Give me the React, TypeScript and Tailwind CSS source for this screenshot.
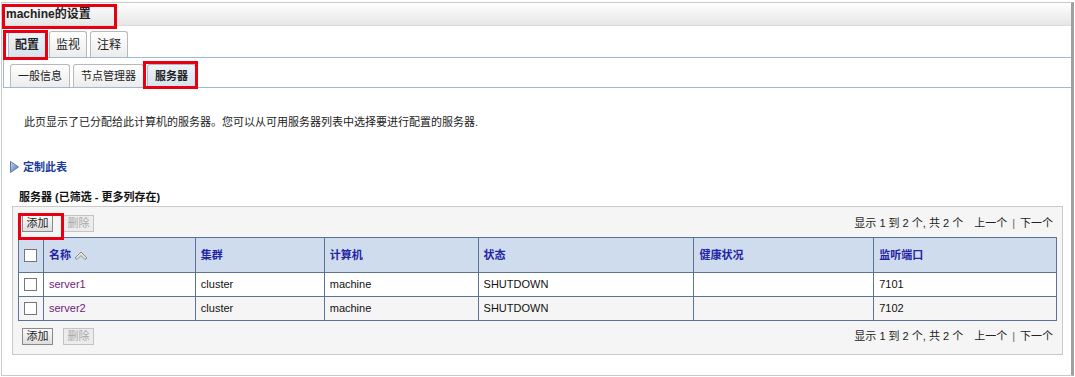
import React from 'react';

/**
 * machine 的设置 - 服务器页
 */

const FONT = "'Liberation Sans','Noto Sans CJK SC',sans-serif";

interface ServerRow {
  name: string;
  cluster: string;
  machine: string;
  state: string;
  health: string;
  port: string;
}

const rows: ServerRow[] = [
  { name: 'server1', cluster: 'cluster', machine: 'machine', state: 'SHUTDOWN', health: '', port: '7101' },
  { name: 'server2', cluster: 'cluster', machine: 'machine', state: 'SHUTDOWN', health: '', port: '7102' },
];

function Tab({ label, active }: { label: string; active?: boolean }) {
  return (
    <div
      className={`flex h-[26px] items-center rounded-t-[3px] border border-b-0 border-[#b8b8b8] px-[6px] text-[12px] text-[#222] ${
        active ? 'bg-linear-to-b from-[#eef3f8] to-[#d6e2ec] font-bold' : 'bg-linear-to-b from-white to-[#ececec]'
      }`}
    >
      {label}
    </div>
  );
}

function SubTab({ label, active }: { label: string; active?: boolean }) {
  return (
    <div
      className={`flex h-[23px] items-center rounded-t-[3px] border border-b-0 border-[#b8b8b8] px-[7px] text-[11px] text-[#222] ${
        active ? 'bg-linear-to-b from-[#eef3f8] to-[#d6e2ec] font-bold' : 'bg-linear-to-b from-white to-[#ececec]'
      }`}
    >
      {label}
    </div>
  );
}

function Checkbox() {
  return <div className="h-[13px] w-[13px] border border-[#777] bg-white" />;
}

function Buttons() {
  return (
    <div className="flex items-center gap-[10px]">
      <button
        type="button"
        className="h-[17px] w-[31px] border border-[#8a8a8a] bg-linear-to-b from-[#fafafa] to-[#dedede] text-[11px] leading-none text-[#222]"
      >
        添加
      </button>
      <button
        type="button"
        disabled
        className="h-[17px] w-[31px] border border-[#c4c4c4] bg-[#ececec] text-[11px] leading-none text-[#a8a8a8]"
      >
        删除
      </button>
    </div>
  );
}

function Pager() {
  return (
    <div className="flex items-center text-[11px] text-[#222]">
      <span>显示 1 到 2 个, 共 2 个</span>
      <span className="ml-[11px]">上一个</span>
      <span className="mx-[5px] text-[#666]">|</span>
      <span>下一个</span>
    </div>
  );
}

function SortIcon() {
  return (
    <svg width="14" height="9" viewBox="0 0 14 9" className="ml-[3px]">
      <polygon points="1,7 7,1 13,7 11,8.5 7,4.5 3,8.5" fill="#e4e4e4" stroke="#8a8a8a" strokeWidth="1" />
    </svg>
  );
}

function Arrow() {
  return (
    <svg width="9" height="12" viewBox="0 0 9 12">
      <defs>
        <linearGradient id="arr" x1="0" y1="0" x2="1" y2="1">
          <stop offset="0" stopColor="#c9d8ee" />
          <stop offset="1" stopColor="#4d6fa8" />
        </linearGradient>
      </defs>
      <polygon points="0.5,0.5 8.5,6 0.5,11.5" fill="url(#arr)" stroke="#5d79a8" strokeWidth="1" />
    </svg>
  );
}

const thClass = 'border border-[#5b7397] px-[5px] text-left font-bold text-[#2323a5]';
const cellClass = 'border border-[#5b7397] px-[5px]';

export default function App() {
  return (
    <div className="relative h-[377px] w-[1075px] bg-white" style={{ fontFamily: FONT }}>
      <div className="ml-[1px] mt-[2px] flex h-[374px] w-[1073px] flex-col border border-r-[3px] border-[#c9c9c9] border-r-[#9f9f9f]">
        {/* タイトル */}
        <div className="flex h-[23px] items-center border-b border-[#dadada] bg-linear-to-b from-white to-[#e6e6e6] px-[4px] text-[12px] font-bold text-[#222]">
          machine的设置
        </div>

        {/* タブ */}
        <div className="mt-[5px] flex items-end gap-[3px] pl-[6px]">
          <Tab label="配置" active />
          <Tab label="监视" />
          <Tab label="注释" />
        </div>
        <div className="ml-[1px] flex h-[31px] items-end gap-[3px] border-l border-t border-b border-[#9bbad8] pl-[6px]">
          <SubTab label="一般信息" />
          <SubTab label="节点管理器" />
          <SubTab label="服务器" active />
        </div>

        <p className="ml-[22px] mt-[27px] text-[11px] leading-[14px] text-[#222]">
          此页显示了已分配给此计算机的服务器。您可以从可用服务器列表中选择要进行配置的服务器.
        </p>

        <div className="ml-[8px] mt-[31px] flex items-center gap-[4px]">
          <Arrow />
          <span className="text-[11px] font-bold leading-[14px] text-[#1a3a9c]">定制此表</span>
        </div>

        <div className="ml-[17px] mt-[16px] text-[11px] font-bold leading-[14px] text-[#111]">
          服务器 (已筛选 - 更多列存在)
        </div>

        {/* テーブルパネル */}
        <div className="ml-[10px] mt-[2px] w-[1051px] border border-[#cacaca] bg-[#f5f5f5] px-[5px] pb-[9px] pt-[8px]">
          <div className="flex items-center justify-between pl-[4px] pr-[4px]">
            <Buttons />
            <Pager />
          </div>
          <table className="mt-[5px] w-[1039px] border-collapse text-[11px]">
            <colgroup>
              <col className="w-[25px]" />
              <col className="w-[152px]" />
              <col className="w-[129px]" />
              <col className="w-[154px]" />
              <col className="w-[216px]" />
              <col className="w-[180px]" />
              <col className="w-[183px]" />
            </colgroup>
            <thead>
              <tr className="h-[35px] bg-[#cfdcee]">
                <th className="border border-[#5b7397]">
                  <div className="flex justify-center">
                    <Checkbox />
                  </div>
                </th>
                <th className={thClass}>
                  <span className="flex items-center">
                    名称
                    <SortIcon />
                  </span>
                </th>
                <th className={thClass}>集群</th>
                <th className={thClass}>计算机</th>
                <th className={thClass}>状态</th>
                <th className={thClass}>健康状况</th>
                <th className={thClass}>监听端口</th>
              </tr>
            </thead>
            <tbody>
              {rows.map((row, index) => (
                <tr key={row.name} className={`h-[24px] ${index % 2 === 1 ? 'bg-[#f5f5f5]' : 'bg-white'}`}>
                  <td className="border border-[#5b7397]">
                    <div className="flex justify-center">
                      <Checkbox />
                    </div>
                  </td>
                  <td className={`${cellClass} text-[#6f1a7a]`}>{row.name}</td>
                  <td className={`${cellClass} text-[#111]`}>{row.cluster}</td>
                  <td className={`${cellClass} text-[#111]`}>{row.machine}</td>
                  <td className={`${cellClass} text-[#111]`}>{row.state}</td>
                  <td className={`${cellClass} text-[#111]`}>{row.health}</td>
                  <td className={`${cellClass} text-[#111]`}>{row.port}</td>
                </tr>
              ))}
            </tbody>
          </table>
          <div className="mt-[7px] flex items-center justify-between pl-[4px] pr-[4px]">
            <Buttons />
            <Pager />
          </div>
        </div>
      </div>

      {/* 注釈の赤枠 */}
      <div className="absolute left-[2px] top-[2px] h-[25px] w-[115px] border-[3px] border-[#e60012]" />
      <div className="absolute left-[3px] top-[28px] h-[30px] w-[45px] border-[3px] border-[#e60012]" />
      <div className="absolute left-[143px] top-[59px] h-[28px] w-[55px] border-[3px] border-[#e60012]" />
      <div className="absolute left-[18px] top-[211px] h-[27px] w-[46px] border-[3px] border-[#e60012]" />
    </div>
  );
}
